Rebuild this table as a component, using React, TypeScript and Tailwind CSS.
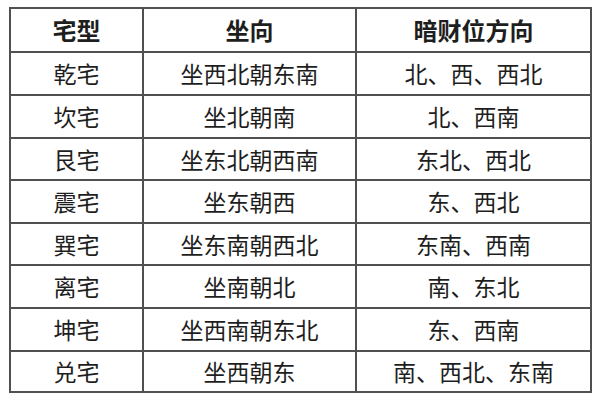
import React from "react";

const rows: [string, string, string][] = [
  ["乾宅", "坐西北朝东南", "北、西、西北"],
  ["坎宅", "坐北朝南", "北、西南"],
  ["艮宅", "坐东北朝西南", "东北、西北"],
  ["震宅", "坐东朝西", "东、西北"],
  ["巽宅", "坐东南朝西北", "东南、西南"],
  ["离宅", "坐南朝北", "南、东北"],
  ["坤宅", "坐西南朝东北", "东、西南"],
  ["兑宅", "坐西朝东", "南、西北、东南"],
];

const heights = ["h-[43px]", "h-[43px]", "h-[42px]", "h-[43px]", "h-[42px]", "h-[43px]", "h-[43px]", "h-[41px]"];

export default function App() {
  return (
    <div
      className="w-[600px] h-[400px] bg-white overflow-hidden pt-[7px] pl-[9px]"
      style={{ fontFamily: '"Noto Sans CJK SC", "Noto Sans", sans-serif' }}
    >
      <table className="border-collapse w-[581px] text-[#1e1e1e] table-fixed">
        <colgroup>
          <col className="w-[133px]" />
          <col className="w-[213px]" />
          <col className="w-[235px]" />
        </colgroup>
        <thead>
          <tr className="h-[44px]">
            {["宅型", "坐向", "暗财位方向"].map((h) => (
              <th
                key={h}
                className="border-2 border-[#505050] text-[24px] font-bold text-center align-middle p-0 leading-none"
              >
                {h}
              </th>
            ))}
          </tr>
        </thead>
        <tbody>
          {rows.map((r, i) => (
            <tr key={r[0]} className={heights[i]}>
              {r.map((c, j) => (
                <td
                  key={j}
                  className="border-2 border-[#505050] text-[23px] font-normal text-center align-middle p-0 leading-none"
                >
                  {c}
                </td>
              ))}
            </tr>
          ))}
        </tbody>
      </table>
    </div>
  );
}
